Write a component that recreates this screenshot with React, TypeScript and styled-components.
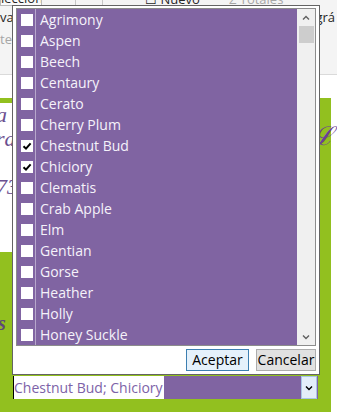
import React from "react";
import styled, { createGlobalStyle } from "styled-components";

const Global = createGlobalStyle`
  html, body { margin: 0; padding: 0; background: #ffffff; }
  body { font-family: "Open Sans", "Noto Sans", sans-serif; }
`;

const PURPLE = "#8064a2";
const GREEN = "#92c01f";

const Page = styled.div`
  position: relative;
  width: 337px;
  height: 412px;
  overflow: hidden;
  background: #ffffff;
  display: flex;
  flex-direction: column;
`;

const Ribbon = styled.div`
  height: 74px;
  background: #f4f4f4;
  border-bottom: 1px solid #dadada;
  position: relative;
  display: grid;
  grid-template-rows: 6px 22px 22px;
  font-family: "Open Sans", sans-serif;
  font-size: 13px;
  color: #262626;
`;

const RibbonTopRow = styled.div`
  display: flex;
  align-items: flex-end;
  height: 6px;
  overflow: hidden;
`;

const RibbonItem = styled.div<{ $w: number; $muted?: boolean; $boxed?: boolean }>`
  width: ${(p) => p.$w}px;
  flex: none;
  line-height: 14px;
  margin-top: -8px;
  color: ${(p) => (p.$muted ? "#a6a6a6" : "#262626")};
  ${(p) => (p.$boxed ? "border: 1px solid #b9b9b9; border-top: none; background:#fafafa;" : "")}
  white-space: nowrap;
  overflow: hidden;
`;

const RibbonSep = styled.div`
  width: 1px;
  height: 6px;
  background: #c6c6c6;
  flex: none;
`;

const RibbonRow = styled.div`
  display: flex;
  justify-content: space-between;
  align-items: center;
  padding-right: 2px;
`;

const RibbonText = styled.span<{ $muted?: boolean }>`
  color: ${(p) => (p.$muted ? "#a6a6a6" : "#262626")};
  font-size: 13px;
`;

const WhiteStrip = styled.div`
  height: 23px;
  background: #ffffff;
`;

const GreenArea = styled.div`
  width: 331px;
  flex: 1;
  background: ${GREEN};
  padding-top: 5px;
  box-sizing: border-box;
  display: flex;
  flex-direction: column;
`;

const FormBand = styled.div`
  display: flex;
  justify-content: space-between;
  align-items: flex-start;
`;

const LabelBox = styled.div`
  width: 60px;
  height: 149px;
  background: #ffffff;
  position: relative;
  font-family: "Liberation Serif", serif;
  font-style: italic;
  color: #6b4f8f;
  font-size: 22px;
  display: flex;
  flex-direction: column;
`;

const LabelLine = styled.div<{ $pt: number }>`
  padding-top: ${(p) => p.$pt}px;
  line-height: 24px;
  height: 24px;
  overflow: hidden;
  margin-left: -4px;
`;

const Script = styled.div`
  font-family: "Liberation Serif", serif;
  font-style: italic;
  font-size: 26px;
  color: #6b3f98;
  margin-top: 14px;
  margin-right: -3px;
`;

const SideS = styled.div`
  font-family: "Liberation Serif", serif;
  font-style: italic;
  font-weight: bold;
  font-size: 20px;
  color: #5d4a7a;
  margin-top: 60px;
  margin-left: -2px;
`;

/* Dropdown popup */
const DropHost = styled.div`
  position: absolute;
  left: 12px;
  top: 5px;
  width: 308px;
  display: flex;
  flex-direction: column;
`;

const Popup = styled.div`
  border: 1px solid #646464;
  background: #ffffff;
  padding: 2px 3px 0 3px;
  display: flex;
  flex-direction: column;
`;

const ListBox = styled.div`
  display: flex;
  border: 1px solid #8c8c8c;
  height: 336px;
  background: ${PURPLE};
`;

const List = styled.div`
  flex: 1;
  position: relative;
  display: flex;
  flex-direction: column;
`;

const Divider = styled.div`
  position: absolute;
  left: 18px;
  top: 0;
  bottom: 0;
  width: 1px;
  background: #b7a7cc;
`;

const Row = styled.div`
  height: 21px;
  display: flex;
  align-items: center;
  padding-left: 4px;
`;

const Check = styled.span`
  width: 12px;
  height: 12px;
  background: #ffffff;
  flex: none;
  display: flex;
  align-items: center;
  justify-content: center;
`;

const Label = styled.span`
  margin-left: 7px;
  color: #f5f2fa;
  font-family: "Open Sans", "Noto Sans", sans-serif;
  font-size: 14px;
  line-height: 21px;
  white-space: nowrap;
`;

const ScrollBar = styled.div`
  width: 18px;
  background: #f0f0f0;
  display: flex;
  flex-direction: column;
  align-items: center;
`;

const ScrollArrow = styled.div`
  height: 17px;
  width: 18px;
  display: flex;
  align-items: center;
  justify-content: center;
`;

const Thumb = styled.div`
  width: 15px;
  height: 17px;
  background: #cdcdcd;
`;

const Spacer = styled.div`
  flex: 1;
`;

const ButtonRow = styled.div`
  height: 28px;
  display: flex;
  justify-content: flex-end;
  align-items: center;
  gap: 7px;
  padding-right: 0px;
`;

const Btn = styled.button<{ $default?: boolean; $w: number }>`
  width: ${(p) => p.$w}px;
  height: 22px;
  padding: 0;
  border: 1px solid ${(p) => (p.$default ? "#3c7fb1" : "#adadad")};
  background: ${(p) => (p.$default ? "#e5f1fb" : "#e1e1e1")};
  font-family: "Open Sans", "Noto Sans", sans-serif;
  font-size: 14px;
  color: #000000;
  line-height: 18px;
`;

const Combo = styled.div`
  margin-top: 1px;
  margin-left: 1px;
  width: 305px;
  height: 23px;
  background: ${PURPLE};
  display: flex;
  align-items: stretch;
  box-sizing: border-box;
`;

const ComboText = styled.div`
  flex: 1;
  display: flex;
  align-items: center;
`;

const Selected = styled.span`
  background: #ffffff;
  color: #7d62a8;
  border-left: 1px solid #000000;
  font-family: "Open Sans", "Noto Sans", sans-serif;
  font-size: 14px;
  line-height: 23px;
  height: 23px;
  padding-right: 1px;
  white-space: nowrap;
`;

const ComboBtn = styled.div`
  width: 16px;
  background: #e3eefa;
  border: 1px solid #a9c6e6;
  box-sizing: border-box;
  display: flex;
  align-items: center;
  justify-content: center;
  margin-right: 1px;
`;

const items: [string, boolean][] = [
  ["Agrimony", false],
  ["Aspen", false],
  ["Beech", false],
  ["Centaury", false],
  ["Cerato", false],
  ["Cherry Plum", false],
  ["Chestnut Bud", true],
  ["Chiciory", true],
  ["Clematis", false],
  ["Crab Apple", false],
  ["Elm", false],
  ["Gentian", false],
  ["Gorse", false],
  ["Heather", false],
  ["Holly", false],
  ["Honey Suckle", false],
];

const Tick = () => (
  <svg width="10" height="10" viewBox="0 0 10 10">
    <path d="M1.5 5.2 L4 7.6 L8.6 2.4" stroke="#000" strokeWidth="2" fill="none" />
  </svg>
);

const Chevron = ({ up, color = "#606060", w = 8 }: { up?: boolean; color?: string; w?: number }) => (
  <svg width={w} height="6" viewBox="0 0 8 6">
    <path
      d={up ? "M1 4.5 L4 1.5 L7 4.5" : "M1 1.5 L4 4.5 L7 1.5"}
      stroke={color}
      strokeWidth="1.4"
      fill="none"
    />
  </svg>
);

export default function App() {
  return (
    <>
      <Global />
      <Page>
        <Ribbon>
          <RibbonTopRow>
            <RibbonItem $w={40} $boxed>lección</RibbonItem>
            <RibbonItem $w={33}> </RibbonItem>
            <RibbonSep />
            <RibbonItem $w={26}> </RibbonItem>
            <RibbonSep />
            <RibbonItem $w={42}> </RibbonItem>
            <RibbonItem $w={84}>☐ Nuevo</RibbonItem>
            <RibbonItem $w={70} $muted>Σ Totales</RibbonItem>
          </RibbonTopRow>
          <RibbonRow>
            <RibbonText>var</RibbonText>
            <RibbonText>grá</RibbonText>
          </RibbonRow>
          <RibbonRow>
            <RibbonText $muted>te</RibbonText>
            <span />
          </RibbonRow>
        </Ribbon>
        <WhiteStrip />
        <GreenArea>
          <FormBand>
            <LabelBox>
              <LabelLine $pt={0}>a 9</LabelLine>
              <LabelLine $pt={0}>ra</LabelLine>
              <LabelLine $pt={0} />
              <LabelLine $pt={0}>73</LabelLine>
            </LabelBox>
            <Script>ℒ</Script>
          </FormBand>
          <SideS>s</SideS>
        </GreenArea>

        <DropHost>
          <Popup>
            <ListBox>
              <List>
                <Divider />
                {items.map(([name, checked]) => (
                  <Row key={name}>
                    <Check>{checked ? <Tick /> : null}</Check>
                    <Label>{name}</Label>
                  </Row>
                ))}
              </List>
              <ScrollBar>
                <ScrollArrow>
                  <Chevron up />
                </ScrollArrow>
                <Thumb />
                <Spacer />
                <ScrollArrow>
                  <Chevron />
                </ScrollArrow>
              </ScrollBar>
            </ListBox>
            <ButtonRow>
              <Btn $default $w={63}>Aceptar</Btn>
              <Btn $w={60}>Cancelar</Btn>
            </ButtonRow>
          </Popup>
          <Combo>
            <ComboText>
              <Selected>Chestnut Bud; Chiciory</Selected>
            </ComboText>
            <ComboBtn>
              <Chevron color="#000" w={8} />
            </ComboBtn>
          </Combo>
        </DropHost>
      </Page>
    </>
  );
}
